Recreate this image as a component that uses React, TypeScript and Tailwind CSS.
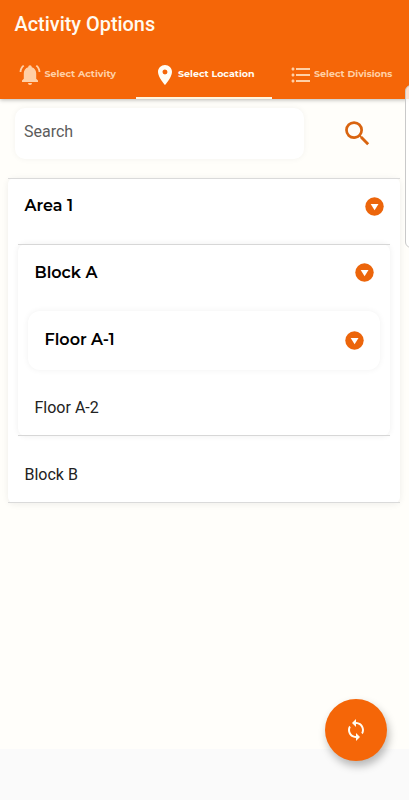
import React from "react";
import {
  MdFormatListBulleted,
  MdLocationOn,
  MdSearch,
  MdSync,
} from "react-icons/md";

const heading = "font-['Montserrat','Inter',sans-serif] font-semibold text-black whitespace-nowrap leading-none";

function BellIcon() {
  return (
    <svg className="size-6 shrink-0" viewBox="0 0 24 24" fill="currentColor">
      <path d="M10 20h4a2 2 0 0 1-4 0zM18.200 15.800V10.300c0-3-1.700-5.300-4.400-6.100-.1-1.100-.8-1.900-1.800-1.900s-1.700.8-1.800 1.900c-2.700.8-4.400 3.100-4.400 6.100v5.500L4 17.600v1.500h16v-1.500z" />
      <path d="M6.300 3.300 5.100 2.100C3 3.700 1.700 6.100 1.600 8.900h1.800c.1-2.300 1.200-4.300 2.900-5.600zM20.600 8.900h1.800c-.1-2.800-1.400-5.200-3.500-6.800l-1.200 1.200c1.700 1.300 2.800 3.300 2.900 5.600z" />
    </svg>
  );
}

function DropIcon() {
  return (
    <svg className="size-[19px] shrink-0" viewBox="0 0 19 19">
      <circle cx="9.5" cy="9.5" r="9.2" fill="#ec650b" />
      <path d="M5.7 7h7.8l-3.9 6.2z" fill="#fff" />
    </svg>
  );
}

function Row({ title, height }: { title: string; height: string }) {
  return (
    <div className={`flex items-center justify-between pl-[16.5px] pr-4 ${height}`}>
      <span className={`${heading} text-[16px]`}>{title}</span>
      <DropIcon />
    </div>
  );
}

export default function App() {
  return (
    <div className="relative flex h-[800px] w-[409px] flex-col overflow-hidden bg-[#fffefa] font-['Roboto',sans-serif]">
      <header className="relative flex h-[99px] shrink-0 flex-col bg-[#f56608] shadow-[0_1px_4px_rgba(0,0,0,0.28)]">
        <h1 className="h-[50px] pl-[14.5px] pt-[13px] text-[19.9px] font-medium leading-6 text-[#fffaf0]">
          Activity Options
        </h1>
        <nav className="flex grow font-['Montserrat','Inter',sans-serif] text-[9.5px] font-bold whitespace-nowrap">
          <div className="flex w-[136px] items-center gap-[3px] pl-[17.5px] text-[#ffd0a6]">
            <BellIcon />
            <span>Select Activity</span>
          </div>
          <div className="relative flex w-[136px] items-center gap-[1px] pl-[17px] text-[#fffdf5]">
            <MdLocationOn className="size-6 shrink-0" />
            <span>Select Location</span>
            <i className="absolute bottom-0 left-0 h-[2px] w-full bg-[#fff6e0]" />
          </div>
          <div className="flex w-[137px] items-center gap-[1px] pl-[17px] text-[#ffd0a6]">
            <MdFormatListBulleted className="size-6 shrink-0" />
            <span>Select Divisions</span>
          </div>
        </nav>
      </header>

      <div className="flex h-[79px] shrink-0 pl-[15px] pt-[9px]">
        <div className="flex h-[51px] w-[289px] shrink-0 items-center rounded-[10px] bg-white pl-[9px] pb-[3px] text-[16px] text-[#5c5c5c] shadow-[0_0_6px_rgba(0,0,0,0.05)]">
          Search
        </div>
        <div className="flex h-[50px] w-[105px] shrink-0 items-center justify-center pl-px">
          <MdSearch className="size-[33px] text-[#d9640f]" />
        </div>
      </div>

      <main className="mx-2 h-[325px] w-[392px] shrink-0 rounded-[6px] bg-white shadow-[0_1px_7px_rgba(0,0,0,0.07)]">
        <div className="h-px bg-[#dadada]" />
        <div className="h-[65px]">
          <Row title="Area 1" height="h-[54px]" />
        </div>
        <section className="mx-[10px] h-[192px] rounded-[8px] bg-white shadow-[0_0_6px_rgba(0,0,0,0.07)]">
          <div className="h-px bg-[#d7d7d7]" />
          <div className="h-[66px]">
            <Row title="Block A" height="h-[55px]" />
          </div>
          <div className="mx-[10px] h-[59px] rounded-[12px] bg-white shadow-[0_0_6px_rgba(0,0,0,0.06)]">
            <Row title="Floor A-1" height="h-[58px]" />
          </div>
          <div className="h-[65px] pl-[16.5px] pt-[26px] text-[16px] leading-6 text-[#222]">Floor A-2</div>
          <div className="h-px bg-[#d7d7d7]" />
        </section>
        <div className="h-[66px] pl-[16.5px] pt-[27px] text-[16px] leading-6 text-[#222]">Block B</div>
        <div className="h-px bg-[#dadada]" />
      </main>

      <div className="mt-auto h-[51px] shrink-0 bg-[#fafafa]" />

      <div className="absolute left-[405px] top-[85px] h-[163px] w-[12px] rounded-[7px] border border-[#c9c9c9] bg-white/80" />
      <button className="absolute left-[325px] top-[699px] flex size-[62px] items-center justify-center rounded-full bg-[#f56608] text-[#fffaf0] shadow-[2px_5px_9px_rgba(0,0,0,0.28)]">
        <MdSync className="size-6" />
      </button>
    </div>
  );
}
